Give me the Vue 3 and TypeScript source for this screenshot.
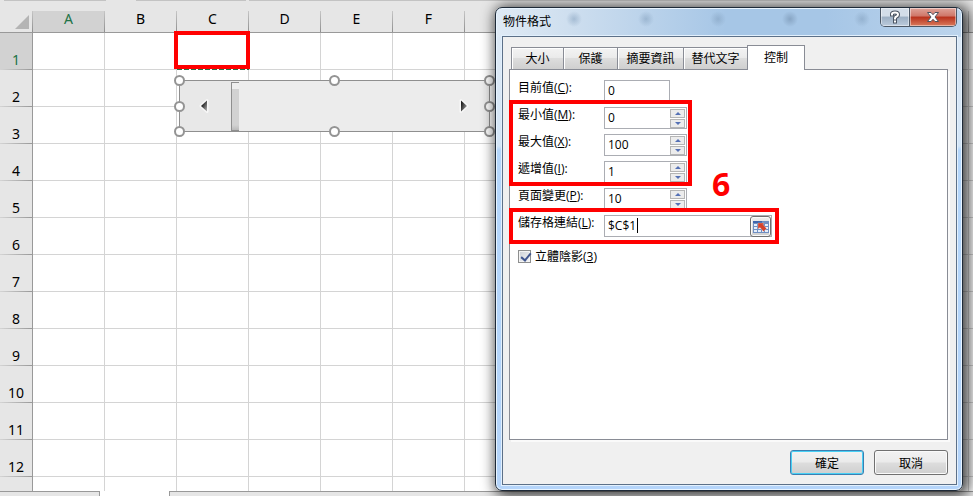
<script setup lang="ts">
import { ref } from 'vue'

interface NumberField {
  id: string
  text: string
  key: string
  value: number
  spin: boolean
}

const columns: string[] = ['A', 'B', 'C', 'D', 'E', 'F', '', '', '', '', '', '', '', '']
const rows: number[] = Array.from({ length: 12 }, (_, i) => i + 1)
const tabs: string[] = ['大小', '保護', '摘要資訊', '替代文字', '控制']
const activeTab = ref<string>('控制')

const fields = ref<NumberField[]>([
  { id: 'current', text: '目前值', key: 'C', value: 0, spin: false },
  { id: 'minimum', text: '最小值', key: 'M', value: 0, spin: true },
  { id: 'maximum', text: '最大值', key: 'X', value: 100, spin: true },
  { id: 'step', text: '遞增值', key: 'I', value: 1, spin: true },
  { id: 'page', text: '頁面變更', key: 'P', value: 10, spin: true },
])
const cellLink = ref<string>('$C$1')
const shading = ref<boolean>(true)

const handles: string[] = ['nw', 'n', 'ne', 'w', 'e', 'sw', 's', 'se']
</script>

<template>
  <main class="app">
    <div class="ribbon-edge"><i class="seg first"></i><i class="seg second"></i><i class="seg rest"></i></div>
    <div class="sheet">
      <table class="grid">
        <colgroup>
          <col class="col-head" />
          <col v-for="(c, i) in columns" :key="i" class="col-cell" />
        </colgroup>
        <thead>
          <tr>
            <td class="corner">
              <svg width="14" height="14" viewBox="0 0 14 14"><path d="M14 0V14H0Z" fill="#b4b4b4" /></svg>
            </td>
            <th v-for="(c, i) in columns" :key="i" scope="col" :class="{ picked: i === 0 }">{{ c }}</th>
          </tr>
        </thead>
        <tbody>
          <tr v-for="r in rows" :key="r">
            <th scope="row" :class="{ picked: r === 1 }">{{ r }}</th>
            <td v-for="(c, i) in columns" :key="i"></td>
          </tr>
          <tr>
            <th scope="row"></th>
            <td v-for="(c, i) in columns" :key="i"></td>
          </tr>
        </tbody>
      </table>
    </div>
    <div class="sheet-tabs"><i class="sheet-tab left"></i><i class="sheet-tab right"></i></div>

    <div class="copy-line"></div>
    <div class="mark mark-cell"></div>

    <div class="scroller">
      <button type="button" class="arrow back" aria-label="Left">
        <svg width="12" height="16" viewBox="0 0 12 16">
          <path d="M9 2.500V13.500L3 8Z" fill="#555" stroke="#f8f8f8" stroke-width="3" stroke-linejoin="round" />
          <path d="M9 2.500V13.500L3 8Z" fill="url(#arrowLeft)" />
          <defs>
            <linearGradient id="arrowLeft" x1="0" y1="0" x2="1" y2="1">
              <stop offset="0.300" stop-color="#222" /><stop offset="1" stop-color="#bbb" />
            </linearGradient>
          </defs>
        </svg>
      </button>
      <div class="thumb"></div>
      <div class="track"></div>
      <button type="button" class="arrow" aria-label="Right">
        <svg width="12" height="16" viewBox="0 0 12 16">
          <path d="M3 2.500V13.500L9 8Z" fill="#555" stroke="#f8f8f8" stroke-width="3" stroke-linejoin="round" />
          <path d="M3 2.500V13.500L9 8Z" fill="url(#arrowRight)" />
          <defs>
            <linearGradient id="arrowRight" x1="0" y1="0" x2="1" y2="0.600">
              <stop offset="0.200" stop-color="#222" /><stop offset="1" stop-color="#999" />
            </linearGradient>
          </defs>
        </svg>
      </button>
      <i v-for="h in handles" :key="h" class="handle" :class="h"></i>
    </div>

    <section class="dialog" role="dialog" aria-labelledby="dialog-title">
      <header class="titlebar">
        <h1 id="dialog-title">物件格式</h1>
        <div class="window-buttons">
          <button type="button" class="help" aria-label="Help">
            <svg width="12" height="14" viewBox="0 0 12 14" fill="none" stroke-linecap="square">
              <path d="M3 4.500V4Q3 2.500 6 2.500T9 4.500Q9 6 7.500 6.500Q6 7 6 8.500M6 11.500V11.600" stroke="#4b5563" stroke-width="4" />
              <path d="M3 4.500V4Q3 2.500 6 2.500T9 4.500Q9 6 7.500 6.500Q6 7 6 8.500M6 11.500V11.600" stroke="#fff" stroke-width="2" />
            </svg>
          </button>
          <button type="button" class="close" aria-label="Close">
            <svg width="14" height="12" viewBox="0 0 14 12">
              <path d="M1.500 1.500H5L7 3.700L9 1.500H12.500L9 6L12.500 10.500H9L7 8.300L5 10.500H1.500L5 6Z" fill="#fff" stroke="#4d535e" stroke-linejoin="round" />
            </svg>
          </button>
        </div>
      </header>
      <form class="client" @submit.prevent>
        <div class="tabs" role="tablist">
          <button
            v-for="t in tabs"
            :key="t"
            type="button"
            role="tab"
            class="tab"
            :class="{ active: t === activeTab, wide: t.length > 2 }"
            :aria-selected="t === activeTab"
            @click="activeTab = t"
          >{{ t }}</button>
        </div>
        <div class="panel">
          <div v-for="f in fields" :key="f.id" class="row">
            <label :for="f.id">{{ f.text }}(<u>{{ f.key }}</u>):</label>
            <div class="box" :class="{ short: !f.spin }">
              <input :id="f.id" v-model.number="f.value" type="text" inputmode="numeric" />
              <div v-if="f.spin" class="spin">
                <button type="button" aria-label="Up" @click="f.value++">
                  <svg width="6" height="3" viewBox="0 0 6 3"><path d="M3 0L6 3H0Z" fill="#5571b5" /></svg>
                </button>
                <button type="button" aria-label="Down" @click="f.value--">
                  <svg width="6" height="3" viewBox="0 0 6 3"><path d="M0 0H6L3 3Z" fill="#5571b5" /></svg>
                </button>
              </div>
            </div>
          </div>
          <div class="row">
            <label for="link">儲存格連結(<u>L</u>):</label>
            <div class="box long">
              <input id="link" v-model="cellLink" type="text" />
              <i class="caret"></i>
              <button type="button" class="pick" aria-label="Select cell">
                <svg width="16" height="14" viewBox="0 0 16 14">
                  <path d="M0 1H16V13H0Z" fill="#6f8fc2" />
                  <path d="M0 1H9V3H0Z" fill="#3f66ad" />
                  <path d="M1 4H4V6H1ZM1 7H4V9H1ZM1 10H4V12H1ZM5 10H8V12H5ZM12 4H15V6H12ZM12 7H15V9H12ZM12 10H15V12H12ZM9 10H11V12H9ZM5 4H8V6H5ZM5 7H8V9H5Z" fill="#e6effb" />
                  <path d="M5 3H11L10 4.500L13.500 8.500L10.500 11.500L7 7.500L5 9Z" fill="#d4422b" stroke="#f3d9d4" stroke-width="0.300" />
                </svg>
              </button>
            </div>
          </div>
          <label class="check">
            <input v-model="shading" type="checkbox" />
            <span>立體陰影(<u>3</u>)</span>
          </label>
          <div class="mark mark-values"></div>
          <div class="mark mark-link"></div>
          <strong class="step-number">6</strong>
        </div>
        <footer class="actions">
          <button type="submit" class="push default">確定</button>
          <button type="button" class="push">取消</button>
        </footer>
      </form>
    </section>
  </main>
</template>

<style>
body {
  overflow: hidden;
}
</style>

<style scoped>
* {
  box-sizing: border-box;
}
.app {
  position: relative;
  display: flex;
  flex-direction: column;
  height: 100vh;
  overflow: hidden;
  background: #fff;
  font-family: "Open Sans", "Noto Sans CJK TC", sans-serif;
  font-size: 12px;
  color: #000;
}
button,
input {
  font: inherit;
  color: inherit;
  margin: 0;
  padding: 0;
}
.ribbon-edge {
  display: flex;
  flex: none;
  height: 11px;
  padding-left: 4px;
  background: #e6e6e6;
}
.seg {
  height: 1px;
  background: #c3c3c3;
}
.first {
  width: 102px;
  margin-right: 30px;
}
.second {
  width: 110px;
  margin-right: 3px;
}
.rest {
  flex: 1;
}
.sheet {
  flex: 1;
  min-height: 0;
}
.grid {
  width: 1041px;
  table-layout: fixed;
  border-collapse: separate;
  border-spacing: 0;
  font-family: "Noto Sans", sans-serif;
  font-size: 14px;
}
.col-head {
  width: 33px;
}
.col-cell {
  width: 72px;
}
.grid th,
.grid td {
  padding: 0;
  font-weight: 400;
}
.grid thead th,
.corner {
  height: 22px;
  line-height: 16px;
  padding: 0 1px 5px 0;
  border-bottom: 1px solid #999;
  background: linear-gradient(#c6c6c6, #8f8f8f) right / 1px 100% no-repeat #e6e6e6;
}
.grid .corner {
  padding: 0 0 3px;
  vertical-align: bottom;
}
.corner svg {
  display: block;
  margin-left: 15px;
}
.grid tbody th {
  height: 37px;
  padding-bottom: 2px;
  line-height: 16px;
  vertical-align: bottom;
  border-right: 1px solid #999;
  background: linear-gradient(90deg, #d4d4d4, #999) bottom / 100% 1px no-repeat #e6e6e6;
}
.grid tbody td {
  border-right: 1px solid #d4d4d4;
  border-bottom: 1px solid #d4d4d4;
}
.grid thead th.picked,
.grid tbody th.picked {
  background-color: #d2d2d2;
  color: #217346;
}
.sheet-tabs {
  position: relative;
  display: flex;
  flex: none;
  justify-content: space-between;
  height: 5px;
  gap: 69px;
  background: #fff;
}
.sheet-tab {
  border-top: 1px solid #999;
  background: #e6e6e6;
}
.left {
  width: 100px;
  border-right: 1px solid #999;
}
.right {
  flex: 1;
  border-left: 1px solid #999;
}
.mark {
  position: absolute;
  border: 4px solid #f00;
  pointer-events: none;
}
.mark-cell {
  left: 174px;
  top: 31px;
  width: 76px;
  height: 38px;
}
.copy-line {
  position: absolute;
  left: 177px;
  top: 69px;
  width: 72px;
  height: 1px;
  background: repeating-linear-gradient(90deg, #217346 0 5px, #fff 5px 7px);
}
.scroller {
  position: absolute;
  left: 179px;
  top: 80px;
  width: 311px;
  height: 52px;
  display: flex;
  border: 1px solid #8f8f8f;
  background: #ececec;
}
.arrow {
  display: flex;
  align-items: center;
  justify-content: center;
  width: 51px;
  border: 0;
  background: #ececec;
}
.arrow.back {
  padding-right: 4px;
  background: #e8e8e8;
}
.thumb {
  width: 8px;
  margin-top: 1px;
  border-left: 1px solid #8f8f8f;
  border-top: 1px solid #8f8f8f;
  border-bottom: 1px solid #8f8f8f;
  background: linear-gradient(#eee 0 6px, #d2d2d2 6px 42px, #bbb);
}
.track {
  flex: 1;
}
.handle {
  position: absolute;
  width: 11px;
  height: 11px;
  border: 2px solid #949494;
  border-radius: 50%;
  background: #fff;
}
.nw, .n, .ne {
  top: -6px;
}
.w, .e {
  top: 20px;
}
.sw, .s, .se {
  bottom: -6px;
}
.nw, .w, .sw {
  left: -6px;
}
.n, .s {
  left: 149px;
}
.ne, .e, .se {
  right: -6px;
}
.dialog {
  position: absolute;
  left: 495px;
  top: 7px;
  bottom: 5px;
  width: 468px;
  display: flex;
  flex-direction: column;
  padding: 0 5px 5px 6px;
  border: 1px solid #1e2a38;
  border-radius: 7px;
  background:
    radial-gradient(circle at 78px 11px, #7e9bb980, transparent 8px),
    radial-gradient(circle at 150px 11px, #7e9bb980, transparent 8px),
    radial-gradient(circle at 222px 11px, #7e9bb980, transparent 8px),
    radial-gradient(circle at 294px 11px, #7490ae99, transparent 8px),
    radial-gradient(circle at 366px 11px, #7e9bb980, transparent 8px),
    linear-gradient(90deg, #dfeaf5 0, #cfdfef 70px, #a6c6e6 230px, #a6c6e6 330px, #bcd4ec) top / 100% 29px no-repeat,
    linear-gradient(#dbe8f5 60px, #d3e5f7 138px, #b4d6fb 142px, #b4d4fa);
  box-shadow: inset 0 0 0 1px #e8f4ff, 3px 2px 14px 3px rgb(0 0 0 / 75%);
}
.titlebar {
  display: flex;
  flex: none;
  align-items: flex-start;
  justify-content: space-between;
  height: 28px;
  padding-left: 1px;
}
h1 {
  margin: 5px 0 0;
  font-size: 12px;
  font-weight: 400;
  line-height: 18px;
}
.window-buttons {
  display: flex;
  height: 19px;
  border: 1px solid #4c5866;
  border-top: 0;
  border-radius: 0 0 5px 5px;
  overflow: hidden;
}
.window-buttons button {
  display: flex;
  align-items: center;
  justify-content: center;
  border: 0;
  box-shadow: inset 0 0 0 1px rgb(255 255 255 / 45%);
}
.help {
  width: 28px;
  background: linear-gradient(#d3dde8 0 45%, #9cafc3 50%, #bccbdc);
}
.window-buttons .close {
  width: 47px;
  border-left: 1px solid #4c5866;
  background: linear-gradient(#dfa49a 0, #cf7668 45%, #b8311c 50%, #d97a5c);
}
.client {
  display: flex;
  flex: 1;
  flex-direction: column;
  padding: 7px 8px 9px 6px;
  border: 1px solid #5c7088;
  outline: 1px solid #e2f0fd;
  background: #f0f0f0;
}
.tabs {
  display: flex;
  flex: none;
  align-items: flex-end;
  height: 25px;
}
.tab {
  width: 54px;
  height: 22px;
  border: 1px solid #898c95;
  border-right: 0;
  border-bottom: 0;
  background: linear-gradient(#f3f3f3, #ebebeb 45%, #dddddd 50%, #cfcfcf);
  box-shadow: inset 1px 1px 0 #fff;
  line-height: 20px;
}
.tab:first-child {
  margin-left: 2px;
  width: 52px;
}
.tab.wide {
  width: 66px;
}
.tab.wide + .tab.wide {
  width: 64px;
}
.tab.active {
  position: relative;
  z-index: 1;
  width: 58px;
  height: 25px;
  margin-bottom: -1px;
  border-right: 1px solid #898c95;
  background: #fff;
}
.panel {
  position: relative;
  flex: 1;
  padding: 10px 8px;
  border: 1px solid #898c95;
  background: #fff;
  box-shadow: 2px 2px 0 #fafafa;
}
.row {
  display: flex;
  height: 27px;
}
.row label {
  width: 86px;
  line-height: 16px;
}
.box {
  position: relative;
  display: flex;
  width: 83px;
  height: 22px;
  border: 1px solid #abadb3;
  background: #fff;
}
.box.short {
  width: 66px;
}
.box.long {
  width: 168px;
}
.box input {
  flex: 1;
  min-width: 0;
  padding: 0 3px 2px;
  border: 0;
  outline: 0;
  background: transparent;
}
.spin {
  display: flex;
  flex-direction: column;
  width: 16px;
  padding: 1px 1px 0 0;
  gap: 1px;
}
.spin button {
  display: flex;
  align-items: center;
  justify-content: center;
  height: 9px;
  border: 1px solid #b5b5b5;
  background: #ececec;
}
.caret {
  position: absolute;
  left: 32px;
  top: 2px;
  width: 1px;
  height: 15px;
  background: #000;
}
.pick {
  display: flex;
  align-items: center;
  justify-content: center;
  width: 21px;
  height: 21px;
  border: 1px solid #707070;
  border-radius: 3px;
  background: linear-gradient(#eee, #cfcfcf);
  box-shadow: inset 0 0 0 1px #fafafa;
}
.check {
  display: flex;
  align-items: center;
  gap: 4px;
  height: 18px;
  margin-top: 5px;
}
.check input {
  appearance: none;
  width: 13px;
  height: 13px;
  border: 1px solid #8e8f8f;
  background: linear-gradient(135deg, #ccd0d6, #f6f6f6);
  box-shadow: inset 0 0 0 1px #f4f4f4;
}
.check input:checked::after {
  content: "";
  display: block;
  width: 4px;
  height: 8px;
  margin: 0 0 0 4px;
  border: solid #40568f;
  border-width: 0 2px 2px 0;
  transform: rotate(40deg);
}
.mark-values {
  left: -1px;
  top: 30px;
  width: 183px;
  height: 86px;
}
.mark-link {
  left: -1px;
  top: 138px;
  width: 270px;
  height: 36px;
}
.step-number {
  position: absolute;
  left: 202px;
  top: 93px;
  color: #f00;
  font-size: 32px;
  line-height: 42px;
}
.actions {
  display: flex;
  flex: none;
  justify-content: flex-end;
  gap: 10px;
  padding: 10px 0 0;
}
.push {
  width: 74px;
  height: 25px;
  border: 1px solid #707070;
  border-radius: 3px;
  background: linear-gradient(#f2f2f2, #ebebeb 48%, #dddddd 52%, #cfcfcf);
  box-shadow: inset 0 0 0 1px #fafafa;
}
.push.default {
  border-color: #3c7fb1;
  box-shadow: inset 0 0 0 1px #48d0f5;
}
</style>
